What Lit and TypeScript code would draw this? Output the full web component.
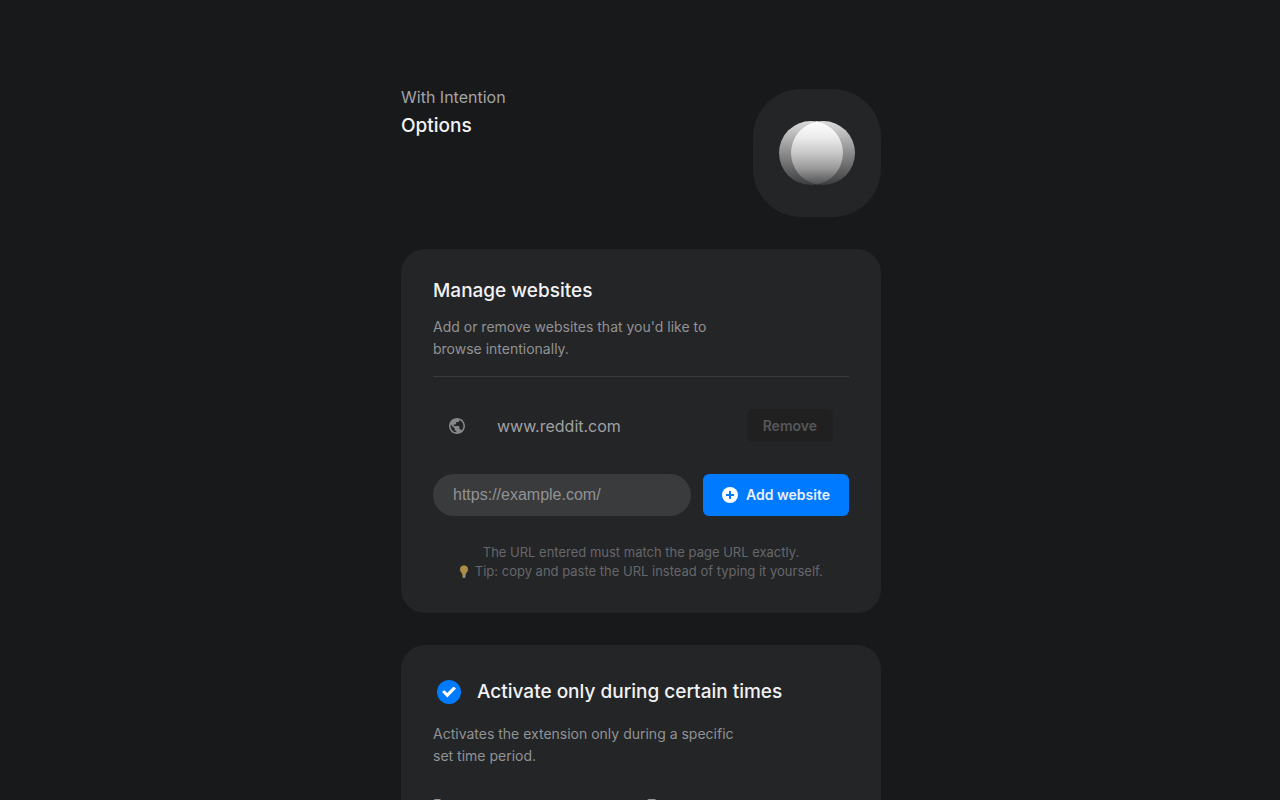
import { LitElement, html, css, svg } from "lit";
import { customElement, state } from "lit/decorators.js";

const logo = svg`
  <svg class="logo-art" viewBox="0 0 76 64" aria-hidden="true">
    <defs>
      <linearGradient id="disc" x1="0" y1="0" x2="0" y2="1">
        <stop offset="0" stop-color="#dcdcdc" />
        <stop offset="0.5" stop-color="#8c8c8d" />
        <stop offset="1" stop-color="#3c3d3e" />
      </linearGradient>
      <linearGradient id="lens" x1="0" y1="0" x2="0" y2="1">
        <stop offset="0" stop-color="#fff" />
        <stop offset="0.25" stop-color="#ececec" />
        <stop offset="0.5" stop-color="#c8c8c8" />
        <stop offset="0.75" stop-color="#989899" />
        <stop offset="1" stop-color="#505152" />
      </linearGradient>
    </defs>
    <circle cx="32" cy="32" r="32" fill="url(#disc)" />
    <circle cx="44" cy="32" r="32" fill="url(#disc)" />
    <path d="M38 0.570A32 32 0 0 1 38 63.430A32 32 0 0 1 38 0.570Z" fill="url(#lens)" />
  </svg>`;

const globe = svg`
  <svg class="globe" viewBox="2 2 20 20" aria-hidden="true">
    <path fill="currentColor" d="M12 2C6.480 2 2 6.480 2 12s4.480 10 10 10 10-4.480 10-10S17.520 2 12 2zm-1 17.930c-3.950-.49-7-3.850-7-7.930 0-.62.080-1.210.21-1.790L9 15v1c0 1.100.9 2 2 2v1.930zm6.900-2.540c-.26-.81-1-1.390-1.900-1.390h-1v-3c0-.55-.45-1-1-1H8v-2h2c.55 0 1-.45 1-1V7h2c1.100 0 2-.9 2-2v-.41c2.930 1.190 5 4.060 5 7.410 0 2.080-.8 3.970-2.100 5.390z" />
  </svg>`;

const plus = svg`
  <svg class="plus" viewBox="0 0 16 16" aria-hidden="true">
    <circle cx="8" cy="8" r="8" fill="#fff" />
    <path d="M8 4v8M4 8h8" stroke="#007aff" stroke-width="2" />
  </svg>`;

const bulb = svg`
  <svg class="bulb" viewBox="0 0 10 16" aria-hidden="true">
    <path d="M5 1a4.400 4.400 0 0 1 4.400 4.400c0 2.100-1.700 3-2.300 4.600L6.800 13.400 5 14.600l-1.800-1.200L2.900 10C2.300 8.400.6 7.500.6 5.400A4.400 4.400 0 0 1 5 1Z" fill="#ac8d49" stroke="#191a1b" stroke-width="0.6" />
    <path d="M4 10.400h2v2.800L5 13.900l-1-.7Z" fill="#8b8e91" />
  </svg>`;

@customElement("app-root")
export class AppRoot extends LitElement {
  static styles = css`
    :host {
      display: block;
      min-height: 100vh;
      background: #18191b;
      color: #f2f2f3;
      font-family: Inter, "Liberation Sans", sans-serif;
      font-size: 16px;
      line-height: 24px;
    }
    * {
      box-sizing: border-box;
    }
    h1, h2, p, ul {
      margin: 0;
      padding: 0;
    }
    .page {
      display: flex;
      justify-content: center;
      padding: 89px 16px 64px 18px;
    }
    .column {
      display: flex;
      flex-direction: column;
      gap: 32px;
      width: 100%;
      max-width: 480px;
    }
    .header {
      display: flex;
      justify-content: space-between;
      align-items: flex-start;
    }
    .brand {
      color: #a3a4a6;
      line-height: 16px;
    }
    .title {
      margin-top: 8px;
      font-size: 19px;
      font-weight: 500;
      line-height: 26px;
    }
    .logo {
      display: grid;
      place-items: center;
      width: 128px;
      height: 128px;
      border-radius: 48px;
      background: #242527;
    }
    .logo-art {
      width: 76px;
      height: 64px;
    }
    .card {
      padding: 32px;
      border-radius: 24px;
      background: #242527;
    }
    .heading {
      font-size: 19px;
      font-weight: 500;
      line-height: 20px;
    }
    .text {
      max-width: 320px;
      margin-top: 15px;
      color: #919294;
      font-size: 14px;
      line-height: 22px;
    }
    .sites {
      margin-top: 16px;
      padding: 32px 16px;
      border-top: 1px solid #3a3b3d;
      list-style: none;
    }
    .site {
      display: flex;
      align-items: center;
    }
    .globe {
      width: 16px;
      height: 16px;
      margin-right: 32px;
      color: #868788;
    }
    .site-name {
      flex: 1;
      color: #a0a1a3;
    }
    button {
      border: 0;
      border-radius: 6px;
      font: inherit;
      font-size: 14px;
      font-weight: 600;
      cursor: pointer;
    }
    .remove {
      height: 33px;
      padding: 0 16px;
      background: #202021;
      color: #56575a;
    }
    .add-form {
      display: flex;
      gap: 12px;
    }
    .url {
      flex: 1;
      min-width: 0;
      height: 42px;
      padding: 0 20px;
      border: 0;
      border-radius: 21px;
      background: #3a3b3d;
      color: #f2f2f3;
      font-family: "Liberation Sans", Arial, sans-serif;
      font-size: 16px;
    }
    .url::placeholder {
      color: #919294;
    }
    .add {
      display: flex;
      align-items: center;
      gap: 8px;
      height: 42px;
      padding: 0 19px;
      background: #007aff;
      color: #e8f1ff;
    }
    .plus {
      width: 16px;
      height: 16px;
    }
    .hint {
      margin-top: 27px;
      color: #66676a;
      font-size: 13px;
      line-height: 19px;
      text-align: center;
    }
    .bulb {
      width: 10px;
      height: 16px;
      margin-right: 2px;
      vertical-align: -4px;
    }
    .toggle {
      display: flex;
      align-items: center;
      gap: 16px;
      padding: 3px 4px 4px;
      cursor: pointer;
    }
    .check {
      appearance: none;
      display: grid;
      place-items: center;
      width: 24px;
      height: 24px;
      margin: 0;
      border-radius: 50%;
      background: #4a4b4d;
      cursor: pointer;
    }
    .check:checked {
      background: #007aff;
    }
    .check:checked::before {
      content: "";
      width: 14px;
      height: 11px;
      background: #fff;
      clip-path: polygon(0 51%, 16% 33%, 37% 58%, 83% 0, 100% 18%, 38% 100%);
    }
    .times {
      display: grid;
      grid-template-columns: 1fr 1fr;
      gap: 12px;
      margin-top: 28px;
    }
    .time {
      display: flex;
      flex-direction: column;
      gap: 8px;
      color: #919294;
      font-size: 14px;
      line-height: 20px;
    }
    .time-input {
      height: 42px;
      padding: 0 20px;
      border: 0;
      border-radius: 21px;
      background: #3a3b3d;
      color: #f2f2f3;
      font: inherit;
    }
  `;

  @state() private sites = ["www.reddit.com"];
  @state() private draft = "";

  private addSite(event: Event) {
    event.preventDefault();
    const name = this.draft.replace(/^https?:\/\//, "").replace(/\/$/, "");
    if (name && !this.sites.includes(name)) {
      this.sites = [...this.sites, name];
    }
    this.draft = "";
  }

  private removeSite(name: string) {
    this.sites = this.sites.filter((site) => site !== name);
  }

  render() {
    return html`
      <main class="page">
        <div class="column">
          <header class="header">
            <div>
              <p class="brand">With Intention</p>
              <h1 class="title">Options</h1>
            </div>
            <div class="logo">${logo}</div>
          </header>

          <section class="card">
            <h2 class="heading">Manage websites</h2>
            <p class="text">Add or remove websites that you'd like to browse intentionally.</p>
            <ul class="sites">
              ${this.sites.map(
                (site) => html`
                  <li class="site">
                    ${globe}
                    <span class="site-name">${site}</span>
                    <button class="remove" type="button" @click=${() => this.removeSite(site)}>Remove</button>
                  </li>
                `
              )}
            </ul>
            <form class="add-form" @submit=${this.addSite}>
              <input
                class="url"
                type="text"
                aria-label="Website URL"
                placeholder="https://example.com/"
                .value=${this.draft}
                @input=${(e: Event) => (this.draft = (e.target as HTMLInputElement).value)}
              />
              <button class="add" type="submit">${plus}<span>Add website</span></button>
            </form>
            <p class="hint">
              The URL entered must match the page URL exactly.<br />
              ${bulb} Tip: copy and paste the URL instead of typing it yourself.
            </p>
          </section>

          <section class="card">
            <h2 class="heading">
              <label class="toggle">
                <input class="check" type="checkbox" checked />
                <span>Activate only during certain times</span>
              </label>
            </h2>
            <p class="text">Activates the extension only during a specific set time period.</p>
            <div class="times">
              <label class="time">From<input class="time-input" type="time" value="09:00" /></label>
              <label class="time">To<input class="time-input" type="time" value="17:00" /></label>
            </div>
          </section>
        </div>
      </main>
    `;
  }
}
